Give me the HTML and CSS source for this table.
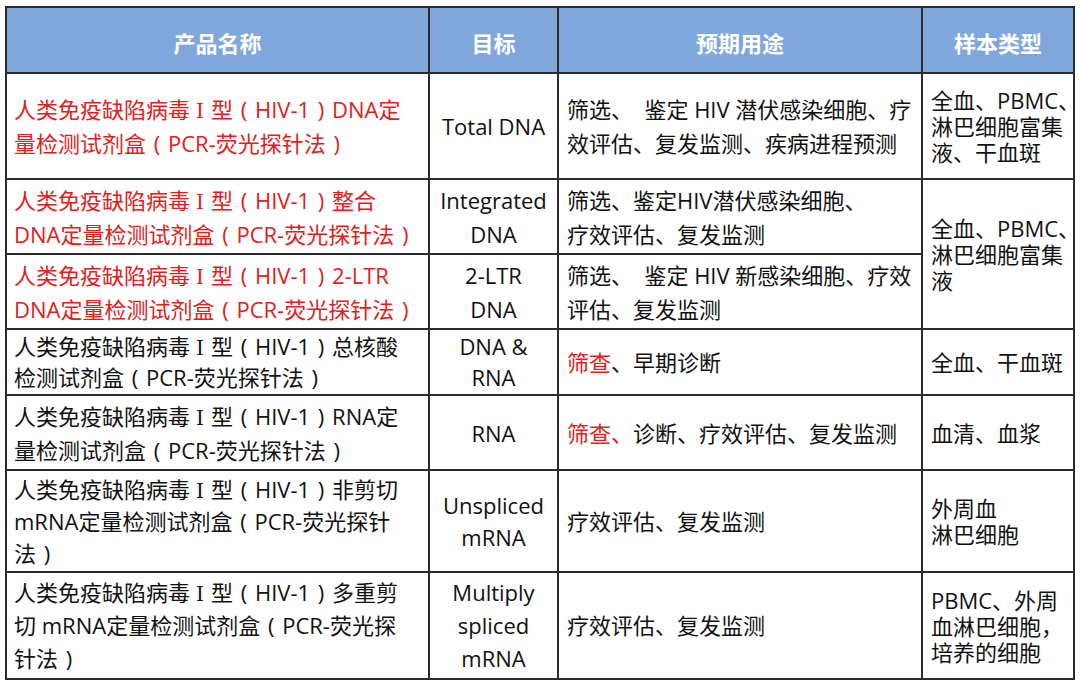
FILE: index.html
```html
<!DOCTYPE html>
<html lang="zh-CN">
<head>
<meta charset="utf-8">
<link rel="stylesheet" href="styles.css">
</head>
<body>
<table class="tbl">
  <colgroup>
    <col class="c1"><col class="c2"><col class="c3"><col class="c4">
  </colgroup>
  <thead>
    <tr class="hrow">
      <th>产品名称</th>
      <th>目标</th>
      <th>预期用途</th>
      <th>样本类型</th>
    </tr>
  </thead>
  <tbody>
    <tr class="r1">
      <td class="name red">人类免疫缺陷病毒<span class="rn">Ⅰ</span>型<span class="pl">(</span>HIV-1<span class="pr">)</span>DNA定<br>量检测试剂盒<span class="pl">(</span>PCR-荧光探针法<span class="pr">)</span></td>
      <td class="tgt">Total DNA</td>
      <td class="use">筛选、&nbsp; 鉴定 HIV 潜伏感染细胞、疗<br>效评估、复发监测、疾病进程预测</td>
      <td class="smp">全血、PBMC、<br>淋巴细胞富集<br>液、干血斑</td>
    </tr>
    <tr class="r2">
      <td class="name red">人类免疫缺陷病毒<span class="rn">Ⅰ</span>型<span class="pl">(</span>HIV-1<span class="pr">)</span>整合<br>DNA定量检测试剂盒<span class="pl">(</span>PCR-荧光探针法<span class="pr">)</span></td>
      <td class="tgt">Integrated<br>DNA</td>
      <td class="use">筛选、鉴定HIV潜伏感染细胞、<br>疗效评估、复发监测</td>
      <td class="smp" rowspan="2">全血、PBMC、<br>淋巴细胞富集<br>液</td>
    </tr>
    <tr class="r3">
      <td class="name red">人类免疫缺陷病毒<span class="rn">Ⅰ</span>型<span class="pl">(</span>HIV-1<span class="pr">)</span>2-LTR<br>DNA定量检测试剂盒<span class="pl">(</span>PCR-荧光探针法<span class="pr">)</span></td>
      <td class="tgt">2-LTR<br>DNA</td>
      <td class="use">筛选、&nbsp; 鉴定 HIV 新感染细胞、疗效<br>评估、复发监测</td>
    </tr>
    <tr class="r4">
      <td class="name">人类免疫缺陷病毒<span class="rn">Ⅰ</span>型<span class="pl">(</span>HIV-1<span class="pr">)</span>总核酸<br>检测试剂盒<span class="pl">(</span>PCR-荧光探针法<span class="pr">)</span></td>
      <td class="tgt">DNA &amp;<br>RNA</td>
      <td class="use"><span class="red">筛查</span>、早期诊断</td>
      <td class="smp">全血、干血斑</td>
    </tr>
    <tr class="r5">
      <td class="name">人类免疫缺陷病毒<span class="rn">Ⅰ</span>型<span class="pl">(</span>HIV-1<span class="pr">)</span>RNA定<br>量检测试剂盒<span class="pl">(</span>PCR-荧光探针法<span class="pr">)</span></td>
      <td class="tgt">RNA</td>
      <td class="use"><span class="red">筛查、</span>诊断、疗效评估、复发监测</td>
      <td class="smp">血清、血浆</td>
    </tr>
    <tr class="r6">
      <td class="name">人类免疫缺陷病毒<span class="rn">Ⅰ</span>型<span class="pl">(</span>HIV-1<span class="pr">)</span>非剪切<br>mRNA定量检测试剂盒<span class="pl">(</span>PCR-荧光探针<br>法<span class="pr">)</span></td>
      <td class="tgt">Unspliced<br>mRNA</td>
      <td class="use">疗效评估、复发监测</td>
      <td class="smp">外周血<br>淋巴细胞</td>
    </tr>
    <tr class="r7">
      <td class="name">人类免疫缺陷病毒<span class="rn">Ⅰ</span>型<span class="pl">(</span>HIV-1<span class="pr">)</span>多重剪<br>切 mRNA定量检测试剂盒<span class="pl">(</span>PCR-荧光探<br>针法<span class="pr">)</span></td>
      <td class="tgt">Multiply<br>spliced<br>mRNA</td>
      <td class="use">疗效评估、复发监测</td>
      <td class="smp">PBMC、外周<br>血淋巴细胞，<br>培养的细胞</td>
    </tr>
  </tbody>
</table>
</body>
</html>
```

FILE: styles.css
```css
html, body {
  margin: 0;
  padding: 0;
  background: #ffffff;
}

body {
  font-family: "Open Sans", "Noto Sans CJK SC", sans-serif;
  font-size: 22px;
  color: #111111;
}

.tbl {
  margin: 6px 0 0 5px;
  width: 1068px;
  table-layout: fixed;
  border-collapse: collapse;
  border: 2px solid #2b2b2b;
}

.c1 { width: 423px; }
.c2 { width: 129px; }
.c3 { width: 364px; }
.c4 { width: 152px; }

th, td {
  border: 2px solid #2b2b2b;
  padding: 0 0 0 7px;
  vertical-align: middle;
  white-space: nowrap;
}

th {
  background: #7fa7dc;
  color: #ffffff;
  font-weight: bold;
  text-align: center;
  padding: 6px 0 0 0;
  line-height: 30px;
}

td {
  line-height: 34px;
  text-align: left;
}

.hrow { height: 66px; }
.r1 { height: 106px; }
.r2 { height: 75px; }
.r3 { height: 75px; }
.r4 { height: 66px; }
.r5 { height: 75px; }
.r6 { height: 102px; }
.r7 { height: 107px; }

.r4 td { line-height: 31px; }
.r6 td { line-height: 32px; }
.r7 td { line-height: 33px; }

.tgt {
  text-align: center;
  padding: 0;
}

.use {
  padding-left: 8px;
}

td.smp {
  line-height: 26px;
  padding-left: 8px;
}

.red {
  color: #e1201c;
}

.rn {
  font-family: "DejaVu Serif", "Liberation Serif", serif;
  font-size: 20px;
  line-height: 1;
  margin: 0 7px 0 6px;
}

.pl, .pr {
  display: inline-block;
  width: 22px;
  text-align: center;
  line-height: 1;
}
```
